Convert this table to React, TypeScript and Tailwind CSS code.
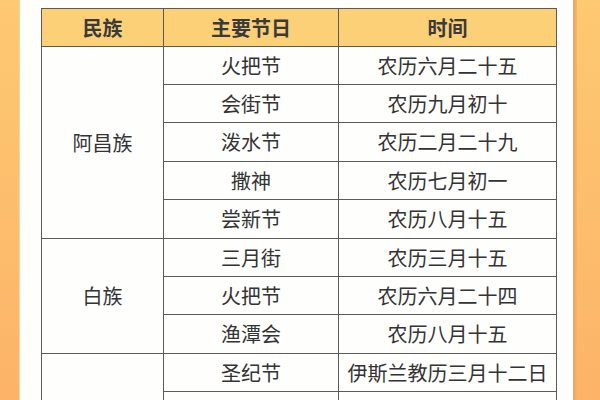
const groups = [
  {
    name: "阿昌族",
    rows: [
      ["火把节", "农历六月二十五", 38],
      ["会街节", "农历九月初十", 38],
      ["泼水节", "农历二月二十九", 39],
      ["撒神", "农历七月初一", 38],
      ["尝新节", "农历八月十五", 39],
    ],
  },
  {
    name: "白族",
    rows: [
      ["三月街", "农历三月十五", 38],
      ["火把节", "农历六月二十四", 38],
      ["渔潭会", "农历八月十五", 39],
    ],
  },
  {
    name: "回族",
    rows: [
      ["圣纪节", "伊斯兰教历三月十二日", 38],
      ["开斋节", "伊斯兰教历十月一日", 38],
      ["古尔邦节", "伊斯兰教历十二月十日", 38],
    ],
  },
] as const;

export default function App() {
  return (
    <div
      className="w-[600px] h-[400px] overflow-hidden flex bg-gradient-to-b from-[#fdc971] to-[#fcb368]"
      style={{ fontFamily: '"Noto Sans CJK SC", "Noto Sans", sans-serif' }}
    >
      <div className="w-[20px] shrink-0 border-r border-[#f6d7a4]" />
      <div className="w-[553px] shrink-0 h-full bg-[#fefefd] pl-[21px] pt-[8px]">
        <div className="w-[516px] border-l border-t border-[#5a5a5a] text-[#333] text-[20px]">
          <div className="flex h-[38px] bg-[#fcd077] font-bold text-[#3a3a3a]">
            <div className="w-[122px] border-r border-b border-[#5a5a5a] flex items-center justify-center">民族</div>
            <div className="w-[175px] border-r border-b border-[#5a5a5a] flex items-center justify-center">主要节日</div>
            <div className="w-[218px] border-r border-b border-[#5a5a5a] flex items-center justify-center">时间</div>
          </div>
          {groups.map((g) => (
            <div key={g.name} className="flex">
              <div className="w-[122px] border-r border-b border-[#5a5a5a] flex items-center justify-center">
                {g.name}
              </div>
              <div className="flex flex-col">
                {g.rows.map(([fest, time, h], i) => (
                  <div key={i} className="flex" style={{ height: h }}>
                    <div className="w-[175px] border-r border-b border-[#5a5a5a] flex items-center justify-center">{fest}</div>
                    <div className="w-[218px] border-r border-b border-[#5a5a5a] flex items-center justify-center whitespace-nowrap">{time}</div>
                  </div>
                ))}
              </div>
            </div>
          ))}
        </div>
      </div>
      <div className="w-[4px] shrink-0 bg-gradient-to-r from-[#e9a45e] to-[#f6b56a]" />
    </div>
  );
}
